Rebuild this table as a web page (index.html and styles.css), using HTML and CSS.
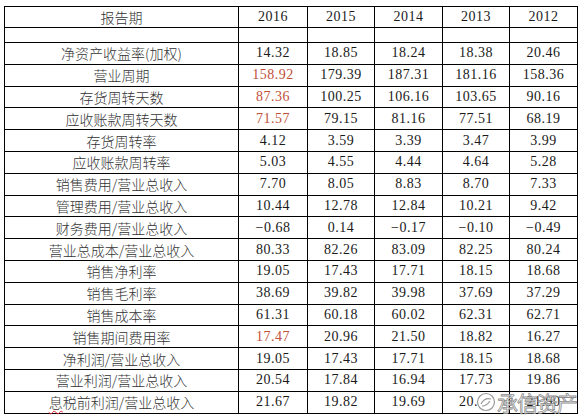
FILE: index.html
```html
<!DOCTYPE html>
<html lang="zh-CN">
<head>
<meta charset="utf-8">
<title>报告期财务指标</title>
<link rel="stylesheet" href="styles.css">
</head>
<body>
<div class="sheet">
<table class="grid">
<colgroup>
<col class="c-label"><col class="c-a"><col class="c-b"><col class="c-c"><col class="c-d"><col class="c-e">
</colgroup>
<tr class="head"><td class="label">报告期</td><td>2016</td><td>2015</td><td>2014</td><td>2013</td><td>2012</td></tr>
<tr class="blank"><td></td><td></td><td></td><td></td><td></td><td></td></tr>
<tr><td class="label">净资产收益率(加权)</td><td>14.32</td><td>18.85</td><td>18.24</td><td>18.38</td><td>20.46</td></tr>
<tr><td class="label">营业周期</td><td class="red">158.92</td><td>179.39</td><td>187.31</td><td>181.16</td><td>158.36</td></tr>
<tr><td class="label">存货周转天数</td><td class="red">87.36</td><td>100.25</td><td>106.16</td><td>103.65</td><td>90.16</td></tr>
<tr><td class="label">应收账款周转天数</td><td class="red">71.57</td><td>79.15</td><td>81.16</td><td>77.51</td><td>68.19</td></tr>
<tr><td class="label">存货周转率</td><td>4.12</td><td>3.59</td><td>3.39</td><td>3.47</td><td>3.99</td></tr>
<tr><td class="label">应收账款周转率</td><td>5.03</td><td>4.55</td><td>4.44</td><td>4.64</td><td>5.28</td></tr>
<tr><td class="label">销售费用/营业总收入</td><td>7.70</td><td>8.05</td><td>8.83</td><td>8.70</td><td>7.33</td></tr>
<tr><td class="label">管理费用/营业总收入</td><td>10.44</td><td>12.78</td><td>12.84</td><td>10.21</td><td>9.42</td></tr>
<tr><td class="label">财务费用/营业总收入</td><td>−0.68</td><td>0.14</td><td>−0.17</td><td>−0.10</td><td>−0.49</td></tr>
<tr><td class="label">营业总成本/营业总收入</td><td>80.33</td><td>82.26</td><td>83.09</td><td>82.25</td><td>80.24</td></tr>
<tr><td class="label">销售净利率</td><td>19.05</td><td>17.43</td><td>17.71</td><td>18.15</td><td>18.68</td></tr>
<tr><td class="label">销售毛利率</td><td>38.69</td><td>39.82</td><td>39.98</td><td>37.69</td><td>37.29</td></tr>
<tr><td class="label">销售成本率</td><td>61.31</td><td>60.18</td><td>60.02</td><td>62.31</td><td>62.71</td></tr>
<tr><td class="label">销售期间费用率</td><td class="red">17.47</td><td>20.96</td><td>21.50</td><td>18.82</td><td>16.27</td></tr>
<tr><td class="label">净利润/营业总收入</td><td>19.05</td><td>17.43</td><td>17.71</td><td>18.15</td><td>18.68</td></tr>
<tr><td class="label">营业利润/营业总收入</td><td>20.54</td><td>17.84</td><td>16.94</td><td>17.73</td><td>19.86</td></tr>
<tr><td class="label"><span class="spell">息</span>税前利润/营业总收入</td><td>21.67</td><td>19.82</td><td>19.69</td><td>20.40</td><td>21.90</td></tr>
</table>
<div class="mark">
<svg class="mark-logo" width="20" height="20" viewBox="0 0 20 20"><circle cx="10" cy="10" r="8.5" fill="#fff" stroke="#999" stroke-width="1.2"/><path d="M5 12c2-4 6-6 10-5M6 14c3 0 6-2 8-5" fill="none" stroke="#999" stroke-width="1.2"/></svg>
<span class="mark-text">承信资产</span>
</div>
</div>
</body>
</html>
```
FILE: styles.css
```css
html, body {
  margin: 0;
  padding: 0;
  background: #fff;
}
.sheet {
  position: relative;
  width: 580px;
  height: 420px;
  overflow: hidden;
}
.grid {
  margin: 6px 0 0 4px;
  border-collapse: collapse;
  table-layout: fixed;
  width: 574px;
}
.c-label { width: 234px; }
.c-a { width: 69px; }
.c-b { width: 67px; }
.c-c { width: 68px; }
.c-d { width: 67px; }
.c-e { width: 68px; }
.grid td {
  border: 1px solid #000;
  padding: 0;
  text-align: center;
  vertical-align: middle;
  font-family: "Liberation Serif", "Times New Roman", serif;
  font-size: 14px;
  color: #1a1a1a;
  line-height: 14px;
  height: 20.8px;
  white-space: nowrap;
  letter-spacing: 0.5px;
}
.grid .head td { height: 20px; }
.grid .blank td { height: 14px; }
.grid td.label {
  font-family: "Noto Sans CJK SC", "Noto Sans", sans-serif;
  font-size: 14px;
  color: #333;
  font-weight: 300;
  letter-spacing: 0;
}
.grid td.red { color: #c0503a; }
.spell {
  text-decoration: underline wavy #d23;
  text-decoration-thickness: 1px;
  text-underline-offset: 2px;
}
.mark {
  position: absolute;
  right: 3px;
  bottom: 7px;
  display: flex;
  align-items: center;
  gap: 1px;
}
.mark-text {
  font-family: "Noto Sans CJK SC", sans-serif;
  font-size: 21px;
  line-height: 22px;
  color: rgba(255,255,255,0.85);
  -webkit-text-stroke: 0.8px #8c8c8c;
  letter-spacing: -1px;
}
```
